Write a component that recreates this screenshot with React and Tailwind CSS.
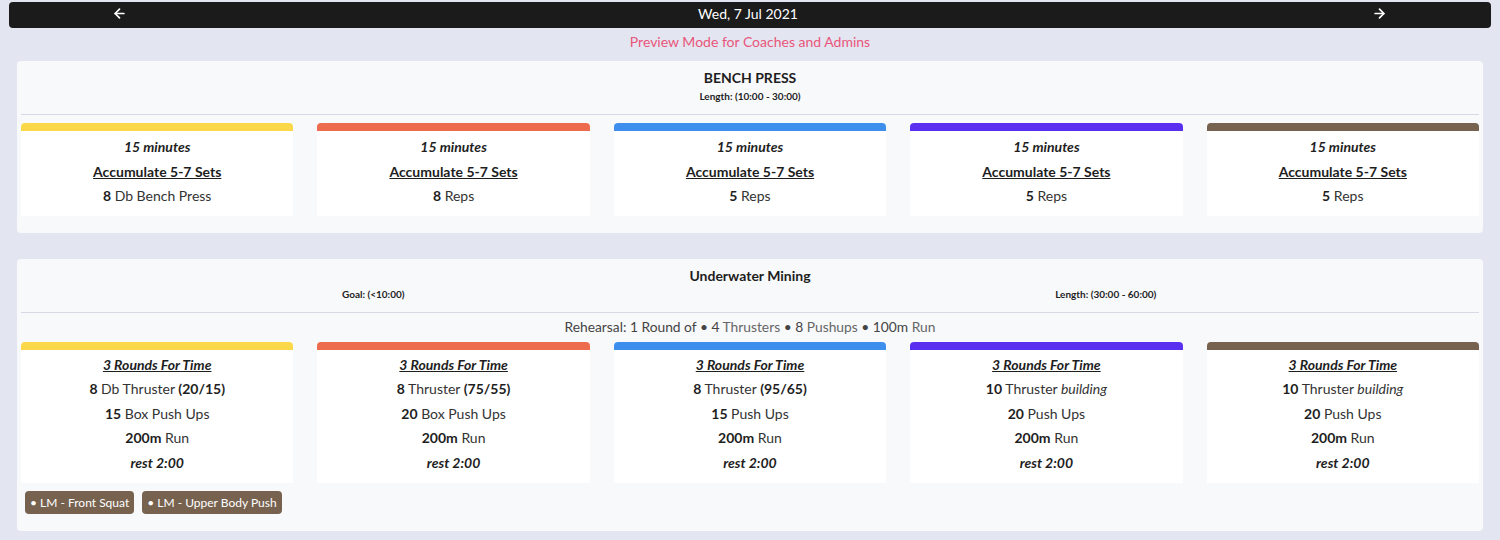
import { ArrowLeft, ArrowRight } from "lucide-react";

const COLORS = ["bg-[#fbd84a]", "bg-[#ed6c4e]", "bg-[#3e8eed]", "bg-[#5b2ff0]", "bg-[#77624f]"];

const benchCols = [
  { n: "8", what: "Db Bench Press" },
  { n: "8", what: "Reps" },
  { n: "5", what: "Reps" },
  { n: "5", what: "Reps" },
  { n: "5", what: "Reps" }
];

const miningCols = [
  { a: ["8", "Db Thruster", "(20/15)"], b: ["15", "Box Push Ups"] },
  { a: ["8", "Thruster", "(75/55)"], b: ["20", "Box Push Ups"] },
  { a: ["8", "Thruster", "(95/65)"], b: ["15", "Push Ups"] },
  { a: ["10", "Thruster", "building"], b: ["20", "Push Ups"], building: true },
  { a: ["10", "Thruster", "building"], b: ["20", "Push Ups"], building: true }
];

function Col({ color, children }) {
  return (
    <div className="bg-white rounded-t-[4px] overflow-hidden">
      <div className={"h-2 " + color} />
      {children}
    </div>
  );
}

export default function App() {
  return (
    <div
      className="min-h-[540px] bg-[#e3e5f1] pt-[2px] text-[14px] text-[#333]"
      style={{ fontFamily: "Lato, 'Noto Sans', sans-serif" }}
    >
      {/* DATE BAR */}
      <div className="mx-[9px] h-[26px] pb-[3px] bg-[#1b1b1b] rounded-[4px] flex items-center text-white">
        <div className="w-[220px] flex justify-center">
          <ArrowLeft size={15} strokeWidth={2.75} />
        </div>
        <div className="flex-1 text-center text-[14px] leading-[18px]">Wed, 7 Jul 2021</div>
        <div className="w-[224px] flex justify-center">
          <ArrowRight size={15} strokeWidth={2.75} />
        </div>
      </div>

      <div className="h-[33px] pt-[4px] text-center leading-[20px] text-[#e9557a] text-[14px]">
        Preview Mode for Coaches and Admins
      </div>

      {/* BENCH PRESS */}
      <div className="mx-[17px] bg-[#f8f9fb] rounded-[4px] px-[4px] pb-[17px]">
        <div className="border-b border-[#d6d9e6] pt-[8px] pb-[11px] text-center text-[#1e1e1e]">
          <div className="font-bold text-[14px] leading-[18px]">BENCH PRESS</div>
          <div className="font-bold text-[10px] leading-[14px] mt-[2px]">Length: (10:00 - 30:00)</div>
        </div>
        <div className="grid grid-cols-5 gap-x-[24px] mt-[8px]">
          {benchCols.map((c, i) => (
            <Col key={i} color={COLORS[i]}>
              <div className="pt-[4px] pb-[7px] text-center leading-[24.5px]">
                <div className="font-bold italic text-[#1e1e1e]">15 minutes</div>
                <div className="font-bold underline text-[#1e1e1e]">Accumulate 5-7 Sets</div>
                <div>
                  <span className="font-bold text-[#1e1e1e]">{c.n}</span> {c.what}
                </div>
              </div>
            </Col>
          ))}
        </div>
      </div>

      {/* UNDERWATER MINING */}
      <div className="mx-[17px] mt-[26px] bg-[#f8f9fb] rounded-[4px] px-[4px] pb-[17px]">
        <div className="border-b border-[#d6d9e6] pt-[8px] pb-[11px] text-center text-[#1e1e1e]">
          <div className="font-bold text-[14px] leading-[18px]">Underwater Mining</div>
          <div className="grid grid-cols-2 -ml-[14px] mr-[7px] font-bold text-[10px] leading-[14px] mt-[2px]">
            <div>Goal: (&lt;10:00)</div>
            <div>Length: (30:00 - 60:00)</div>
          </div>
        </div>
        <div className="text-center text-[13.8px] leading-[20px] pt-[4px] pb-[5px] text-[#444]">
          Rehearsal: 1 Round of • 4 <span className="text-[#666]">Thrusters</span> • 8{" "}
          <span className="text-[#666]">Pushups</span> • 100m <span className="text-[#666]">Run</span>
        </div>
        <div className="grid grid-cols-5 gap-x-[24px]">
          {miningCols.map((c, i) => (
            <Col key={i} color={COLORS[i]}>
              <div className="pt-[3px] pb-[8px] text-center leading-[24.5px]">
                <div className="font-bold italic underline text-[#1e1e1e]">3 Rounds For Time</div>
                <div>
                  <span className="font-bold text-[#1e1e1e]">{c.a[0]}</span> {c.a[1]}{" "}
                  {c.building ? (
                    <span className="italic">{c.a[2]}</span>
                  ) : (
                    <span className="font-bold text-[#1e1e1e]">{c.a[2]}</span>
                  )}
                </div>
                <div>
                  <span className="font-bold text-[#1e1e1e]">{c.b[0]}</span> {c.b[1]}
                </div>
                <div>
                  <span className="font-bold text-[#1e1e1e]">200m</span> Run
                </div>
                <div className="font-bold italic text-[#1e1e1e]">rest 2:00</div>
              </div>
            </Col>
          ))}
        </div>
        <div className="flex gap-[8px] pl-[4px] mt-[8px]">
          {["LM - Front Squat", "LM - Upper Body Push"].map((t) => (
            <div
              key={t}
              className="h-[23px] px-[5px] flex items-center rounded-[4px] bg-[#77624f] text-white text-[12px]"
            >
              • {t}
            </div>
          ))}
        </div>
      </div>
    </div>
  );
}
